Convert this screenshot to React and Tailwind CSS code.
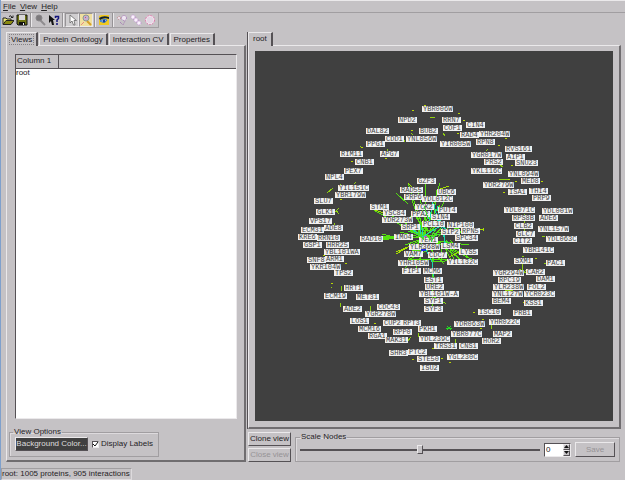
import React from "react";

const LABELS = [
  ["YBR006W", 422, 109], ["NPD2", 398, 120], ["DAL82", 366, 131], ["BUB2", 419, 131], ["CDD1", 385, 139],
  ["YNL056W", 406, 139], ["PPG1", 366, 144], ["RIM11", 340, 154], ["CNB1", 355, 162], ["APG7", 380, 154],
  ["PEX7", 344, 171], ["NPL4", 325, 177], ["YBR179W", 335, 195], ["YIL151C", 338, 188], ["SLU7", 314, 201],
  ["GZF3", 417, 181], ["PRP6", 404, 197], ["RAD55", 400, 190], ["UBC6", 437, 192], ["YDL012C", 422, 199],
  ["RRN7", 442, 120], ["COF1", 443, 128], ["CIN4", 466, 125], ["RAD4", 460, 135], ["YHR204W", 479, 134],
  ["YIR005W", 440, 144], ["RPN8", 476, 142], ["RVS161", 505, 149], ["YGR017W", 471, 155], ["AIP1", 506, 157],
  ["PRS2", 484, 162], ["SNU23", 515, 163], ["YKL116C", 471, 171], ["YNL094W", 508, 174], ["MED8", 521, 181],
  ["YDR279W", 483, 185], ["ISA1", 508, 192], ["THI4", 529, 191], ["PRP9", 532, 198],
  ["GLK1", 316, 212], ["STM1", 370, 207], ["VPS17", 309, 221], ["ADE8", 324, 228], ["ECM31", 301, 230],
  ["KRE6", 298, 237], ["RRN10", 317, 238], ["RAD10", 360, 239], ["GSP1", 303, 245], ["HRR25", 326, 245],
  ["YBL101WA", 324, 252], ["SNF8", 307, 260], ["ARM1", 325, 259], ["YKR104W", 310, 267], ["TPS2", 334, 273],
  ["HRT1", 344, 288], ["ECM19", 324, 296], ["MET31", 356, 297],
  ["YDR273W", 382, 220], ["YSC84", 383, 213], ["YCK2", 415, 207], ["PUT4", 438, 210], ["PPA2", 411, 214],
  ["SIN4", 431, 217], ["SRP1", 401, 227], ["PCL10", 422, 224], ["NIP100", 447, 225], ["SIP2", 441, 232],
  ["RPN5", 461, 231], ["IMO4", 394, 237], ["TEM1", 419, 240], ["SPC34", 455, 238], ["YLR368W", 409, 247],
  ["LSM4", 441, 246], ["LYS5", 459, 252], ["VAM7", 404, 254], ["CDC7", 428, 255], ["YHR105W", 398, 263],
  ["YIL132C", 447, 262], ["FIP1", 402, 271], ["MCM6", 423, 271], ["EST1", 424, 280], ["URE2", 425, 287],
  ["YBL101W-A", 419, 294], ["SYF1", 424, 301], ["SYF3", 424, 309],
  ["YDL071C", 504, 210], ["YDL001W", 542, 211], ["RPS8B", 512, 218], ["ADE6", 539, 218], ["CLB2", 514, 226],
  ["YNL157W", 538, 229], ["GLC7", 516, 234], ["YDL063C", 546, 239], ["CIT2", 513, 241], ["YBR141C", 523, 250],
  ["SXM1", 514, 261], ["PAC1", 546, 263], ["YGR294W", 493, 273], ["CAR2", 526, 272], ["RPC19", 498, 280],
  ["DAM1", 536, 279], ["YLR238W", 493, 287], ["FOL2", 527, 287], ["BEM4", 492, 301], ["YNL127W", 492, 294],
  ["YCR023C", 524, 294], ["KSS1", 524, 303],
  ["ADE2", 343, 309], ["CDC43", 377, 307], ["YGR278W", 365, 314], ["LOS1", 350, 321], ["MCM16", 358, 329],
  ["CUP2", 383, 323], ["RPT3", 402, 323], ["RPP0", 393, 332], ["PKH1", 418, 329], ["RGA1", 368, 336],
  ["MAK31", 385, 340], ["YDL239C", 419, 339], ["TRS31", 434, 346], ["SHR3", 389, 353], ["PTC2", 408, 352],
  ["STE50", 417, 359], ["ISU2", 420, 368], ["ISC10", 478, 312], ["PRB1", 513, 313], ["YDR063W", 454, 324],
  ["YHR022C", 489, 322], ["YBR077C", 451, 334], ["MAP2", 493, 334], ["HOR2", 482, 341], ["CNS1", 459, 346],
  ["YGL230C", 447, 357],
];

const HUB_EDGES =
  "M425 234L408 183M425 234L426 183M425 234L440 183M427 236L449 192M425 234L385 212M424 238L372 209M424 238L381 237M382 234L398 238L381 240M424 238L396 254L410 246M428 236L483 229M430 240L469 245M430 240L466 250M430 240L478 262M432 262L470 259L450 240M428 250L400 264M432 250L433 312M433 296L444 303M445 224L430 240M455 222L432 242M440 205L420 235M412 200L424 236M418 190L428 232M400 225L424 236M400 220L420 214M415 215L428 238M405 245L430 236M432 234L468 226M440 232L470 232M448 246L462 262M444 246L452 262M420 218L420 240M428 212L424 240M410 262L404 270M420 258L416 268M396 193L408 204M437 190L434 212M441 262L441 246M408 259L450 260M420 240L408 260M422 240L420 262M426 244L444 264M434 240L456 256M400 232L424 238M398 217L422 236M446 214L428 234M421 240L413 250L421 250M418 232L426 216M381 236L394 236M381 238L392 238M415 232L426 232M416 229L430 231M436 232L446 234M450 250L456 264M452 248L468 258";
const HUB_CYAN =
  "M433 200L430 218M437 206L446 246M420 225L420 238M413 230L428 240M445 230L444 246M432 262L434 280M425 210L432 226M424 236L440 226M434 214L446 230M423 244L432 262M421 228L420 238M422 228L422 238M434 204L438 222";
const HUB_FRONT =
  "M424 206L428 218M436 229L429 240M408 231L424 236M440 234L428 238M433 258v4M414 233L424 238M418 232L424 240M433 276v2M437 232L431 242M446 240L449 244";
const OUTER_EDGES =
  "M430 118l5-1M411 119l3-1M399 123l2-2M411 133l2 2M403 139l2 3M360 146l2 2M388 149l-2 4M327 193l6-5M340 184v2M354 184l2-2M339 208l-3 3l3 3M335 211h3M334 223l3 5M341 286v5M331 287h1M371 306l-1 6M340 303v4M408 341l3-4M418 333l1 4M491 325v4M507 285v9M524 234v-20M522 259v13M519 269l4 3l4-2M520 272h6M500 165l3 2M542 237l3-1M555 212l4-2M499 180l9-1M443 133l2 3M474 137l3-2M486 151l2-2M505 290l8 1M544 263l4 1M522 257l2-1M455 339v4M444 302l2 2M331 226h5";
const DOTS = [
  [412, 110], [458, 113], [463, 120], [411, 130], [457, 133], [498, 145], [361, 147], [351, 161],
  [340, 199], [511, 165], [508, 179], [515, 181], [541, 181], [503, 192], [331, 283], [345, 263],
  [473, 312], [482, 319], [374, 323], [412, 359], [441, 358], [449, 362], [498, 302], [535, 258],
  [523, 302], [323, 255], [505, 138], [480, 328], [385, 158], [424, 105], [432, 348],
];

function Network() {
  return (
    <svg role="img" aria-label="Protein network" viewBox="255 51 358 370" className="block h-full w-full">
      <g fill="none" strokeWidth="1" shapeRendering="crispEdges">
        <path d={OUTER_EDGES} stroke="#8fd012" />
        {DOTS.map(([x, y]) => (
          <rect key={x + "-" + y} x={x} y={y} width="2" height="1" fill="#b8d800" />
        ))}
        <path d="M446 328h6M447 326l4 4M447 330l4-4" stroke="#22dd22" />
        <path d={HUB_EDGES} stroke="#55e010" />
        <path
          d="M396 254l14-8M396 252l12-5M372 209l12 4M469 231l14-2M437 190l12-4M415 190l-7-7M483 228v3M449 257l10-5"
          stroke="#a8e000"
        />
        <path d={HUB_CYAN} stroke="#18d8b0" />
      </g>
      {LABELS.map(([name, x, y]) => (
        <g key={name}>
          <rect x={x} y={y - 3} width={Math.round(name.length * 4.2 + 2)} height="6" fill="#f0f0f0" />
          <text x={x + 1} y={y + 2} className="fill-[#404040] font-['Liberation_Mono',monospace] text-[7px]">
            {name}
          </text>
        </g>
      ))}
      <g fill="none" shapeRendering="crispEdges">
        <path d={HUB_FRONT} stroke="#40e030" />
        <path d="M421 250h5" stroke="#2030e0" strokeWidth="2" />
        <path d="M424 236h3" stroke="#d050c0" />
      </g>
    </svg>
  );
}

const raised = "border border-t-[#ebe9eb] border-l-[#ebe9eb] border-r-[#555155] border-b-[#555155]";
const sunken = "border border-t-[#555155] border-l-[#555155] border-r-[#ebe9eb] border-b-[#ebe9eb]";
const pressedTool = "border border-t-[#969396] border-l-[#969396] border-r-[#ebe9eb] border-b-[#ebe9eb] bg-[#d0ced0]";

function Tool({ label, pressed, children }) {
  return (
    <button
      type="button"
      aria-label={label}
      className={"flex h-[14px] w-[14px] items-center justify-center " + (pressed ? pressedTool : "")}
    >
      <svg viewBox="0 0 12 12" className="h-3 w-3 shrink-0">{children}</svg>
    </button>
  );
}

function Separator() {
  return <span className="mx-[1px] h-[14px] w-[2px] border-l border-r border-l-[#969396] border-r-[#ebe9eb]" />;
}

function Toolbar() {
  return (
    <div role="toolbar" className="flex h-[15px] w-fit items-center border-r border-b border-[#a19ea1]">
      <Tool label="Open">
        <path d="M1 10V4h3l1 1h4v2" fill="#eeea78" stroke="#222" />
        <path d="M1 10.500l3-4h8l-3 4z" fill="#8a8a10" stroke="#222" />
        <path d="M7 2.500q2-2 3 1m-1 0h2v-2" fill="none" stroke="#222" />
      </Tool>
      <Tool label="Save file">
        <path d="M1 1h10v10H2l-1-1z" fill="#6f7410" stroke="#111" />
        <path d="M3 1h6v5H3z" fill="#d8d6d8" />
        <path d="M3 8h6v3H3z" fill="#111" />
        <path d="M7 9h1v2H7z" fill="#eee" />
      </Tool>
      <Separator />
      <Tool label="Find">
        <path d="M6 6l5 5" stroke="#8f8c8f" strokeWidth="2" />
        <circle cx="5" cy="4" r="3" fill="#7c797c" stroke="#8a878a" />
      </Tool>
      <Tool label="What's this?">
        <path d="M1 1v8l2-2 1 4h2L5 6h2z" fill="#111" />
        <path d="M7.500 4V2.500h3v2l-1.500 1.500V8M9 9v2" fill="none" stroke="#14147c" strokeWidth="1.500" />
      </Tool>
      <Separator />
      <Tool label="Select" pressed>
        <path d="M4 1v8l2-2 1.500 4h1.500L8 6.500h2.500z" fill="#fff" stroke="#666" strokeWidth="0.800" />
      </Tool>
      <Tool label="Zoom" pressed>
        <path d="M0 0h12v12H0z" fill="#f0e0a0" />
        <path d="M7 7l4 4" stroke="#d5a028" strokeWidth="2" />
        <circle cx="6" cy="4" r="3" fill="#c5b0d0" stroke="#8d9a8e" />
        <path d="M1 11l3-3" stroke="#e88a80" />
        <path d="M5 3h1v1H5z" fill="#d05070" />
      </Tool>
      <Separator />
      <Tool label="Overview">
        <path d="M1 2l2-1h8v10H1z" fill="#f0c820" />
        <path d="M1 4q4-3 10-1v2Q6 3 2 6z" fill="#123" />
        <path d="M2 7q4-3 7-1-2 4-7 1z" fill="#fff" stroke="#2878d8" />
        <circle cx="6" cy="7" r="1.500" fill="#1640a0" />
      </Tool>
      <Separator />
      <Tool label="Random layout">
        <g fill="#efe6f2" stroke="#a070b0" strokeDasharray="1 1">
          <circle cx="3" cy="4" r="1.500" stroke="#c08080" />
          <circle cx="8" cy="4" r="2.500" />
          <path d="M4 8l3 3 2-4" fill="none" />
        </g>
      </Tool>
      <Tool label="Cluster layout">
        <g fill="#fbf2fd" stroke="#b978d0" strokeWidth="0.700" strokeDasharray="1 1">
          <circle cx="3" cy="3" r="2" /><circle cx="6" cy="6" r="2" /><circle cx="9" cy="9" r="2" />
        </g>
      </Tool>
      <Tool label="Circle layout">
        <circle cx="6" cy="6" r="4" fill="#e2d8e4" stroke="#f4e8f2" strokeWidth="1.500" />
        <circle cx="6" cy="6" r="4.500" fill="none" stroke="#d878a8" strokeWidth="1" strokeDasharray="2 1" />
      </Tool>
      <span className="w-[1px]" />
    </div>
  );
}

function Tab({ active, children }) {
  return (
    <button
      type="button"
      role="tab"
      aria-selected={!!active}
      className={
        "relative whitespace-nowrap border-t border-l border-r-2 border-t-[#ebe9eb] border-l-[#ebe9eb] border-r-[#555155] " +
        (active ? "-mb-[1px] h-[14px] bg-[#c5c2c5] px-[2px] pb-[1px]" : "h-3 px-[3px]")
      }
    >
      {children}
    </button>
  );
}

const group = "min-w-0 border border-[#a19ea1] shadow-[inset_1px_1px_0_#dddadd]";

export default function App() {
  return (
    <div className="flex h-screen min-h-[400px] flex-col border-l border-[#7fa0cc] bg-[#c5c2c5] font-['Liberation_Sans',Arial,sans-serif] text-[8px] leading-[10px] text-[#252325]">
      <nav className="flex h-[13px] shrink-0 items-center gap-1 border-t border-b border-t-[#ebe9eb] border-b-[#a19ea1] pl-[2px]">
        <button type="button"><u>F</u>ile</button>
        <button type="button"><u>V</u>iew</button>
        <button type="button"><u>H</u>elp</button>
      </nav>
      <Toolbar />

      <main className="flex min-h-0 flex-1 pt-1 pr-1">
        <section className="flex w-[245px] shrink-0 flex-col pl-[5px]">
          <div role="tablist" className="flex h-[13px] shrink-0 items-end gap-[1px]">
            <Tab active><span className="block border border-dotted border-[#858285] px-px leading-[9px]">Views</span></Tab>
            <Tab>Protein Ontology</Tab>
            <Tab>Interaction CV</Tab>
            <Tab>Properties</Tab>
          </div>
          <div className="flex min-h-0 flex-1 flex-col border-t border-r-2 border-b-2 border-l border-t-[#ebe9eb] border-r-[#706d70] border-b-[#706d70] border-l-[#ebe9eb] pt-2 pr-[7px] pl-2">
            <div className={"min-h-0 flex-1 overflow-hidden bg-white " + sunken}>
              <table className="w-full border-collapse text-left">
                <thead>
                  <tr className="h-[13px] border-b border-[#555155] bg-[#c5c2c5]">
                    <th scope="col" className="w-[42px] whitespace-nowrap border-r border-[#555155] pl-[1px] font-normal">Column 1</th>
                    <th aria-hidden="true" />
                  </tr>
                </thead>
                <tbody>
                  <tr className="leading-[8px]"><td colSpan="2">root</td></tr>
                </tbody>
              </table>
            </div>
            <fieldset className={"mt-2 mb-[3px] -ml-[6px] h-[30px] w-[150px] shrink-0 px-[5px] " + group}>
              <legend className="-ml-[2px] px-[1px]">View Options</legend>
              <div className="flex items-center gap-1">
                <button type="button" className={"h-[14px] w-[74px] whitespace-nowrap bg-[#404040] text-[#dedede] " + raised}>Background Color...</button>
                <label className="flex items-center gap-[2px] whitespace-nowrap">
                  <span className="relative flex h-[7px] w-[7px]">
                    <input type="checkbox" defaultChecked className="peer h-[7px] w-[7px] appearance-none border border-t-[#555155] border-r-[#ebe9eb] border-b-[#ebe9eb] border-l-[#555155] bg-white" />
                    <svg viewBox="0 0 7 7" className="pointer-events-none absolute inset-0 hidden peer-checked:block"><path d="M1 3l2 2 3-4" fill="none" stroke="#111" strokeWidth="1" /></svg>
                  </span>
                  Display Labels
                </label>
              </div>
            </fieldset>
          </div>
        </section>

        <section className="flex min-w-0 flex-1 flex-col pl-[1px]">
          <div className="flex min-h-0 flex-1 flex-col border-l border-[#555155]">
            <div role="tablist" className="flex h-[13px] shrink-0 items-end">
              <Tab active><span className="px-[2px]">root</span></Tab>
            </div>
            <div className="min-h-0 flex-1 border-t border-r-2 border-b-2 border-l border-t-[#ebe9eb] border-r-[#706d70] border-b-[#706d70] border-l-[#ebe9eb] px-[6px] pt-[5px] pb-[6px]">
              <div className="h-full bg-[#404040]"><Network /></div>
            </div>
          </div>
          <div className="flex shrink-0 items-start gap-[4px] pt-[3px] pr-[1px] pl-[1px]">
            <div className="flex w-[43px] shrink-0 flex-col gap-[2px]">
              <button type="button" className={"h-[14px] whitespace-nowrap text-center " + raised}>Clone view</button>
              <button type="button" disabled className={"h-[14px] whitespace-nowrap text-center text-[#969396] " + raised}>Close view</button>
            </div>
            <fieldset className={"h-[30px] flex-1 px-1 " + group}>
              <legend className="px-[1px] whitespace-nowrap">Scale Nodes</legend>
              <div className="flex items-center gap-1">
                <input
                  type="range"
                  aria-label="Scale Nodes"
                  className="h-[9px] min-w-0 flex-1 appearance-none bg-[linear-gradient(#555155,#555155)] bg-[length:100%_2px] bg-center bg-no-repeat [&::-webkit-slider-thumb]:h-[9px] [&::-webkit-slider-thumb]:w-[6px] [&::-webkit-slider-thumb]:appearance-none [&::-webkit-slider-thumb]:border [&::-webkit-slider-thumb]:border-t-[#ebe9eb] [&::-webkit-slider-thumb]:border-r-[#555155] [&::-webkit-slider-thumb]:border-b-[#555155] [&::-webkit-slider-thumb]:border-l-[#ebe9eb] [&::-webkit-slider-thumb]:bg-[#c5c2c5]"
                />
                <div className={"flex h-[14px] w-[27px] bg-white " + sunken}>
                  <input type="text" aria-label="Scale value" defaultValue="0" className="min-w-0 flex-1 pl-[1px]" />
                  <span className="flex w-[7px] flex-col">
                    <button type="button" aria-label="Increase" className={"flex flex-1 items-center justify-center bg-[#c5c2c5] " + raised}>
                      <svg viewBox="0 0 5 3" className="h-[3px] w-[5px]"><path d="M0 3l2.500-3L5 3z" fill="#111" /></svg>
                    </button>
                    <button type="button" aria-label="Decrease" className={"flex flex-1 items-center justify-center bg-[#c5c2c5] " + raised}>
                      <svg viewBox="0 0 5 3" className="h-[3px] w-[5px]"><path d="M0 0l2.500 3L5 0z" fill="#111" /></svg>
                    </button>
                  </span>
                </div>
                <button type="button" disabled className={"h-[15px] w-10 text-[#969396] " + raised}>Save</button>
              </div>
            </fieldset>
          </div>
        </section>
      </main>

      <footer className="mt-[6px] flex h-3 shrink-0">
        <span className="border border-t-[#a19ea1] border-r-[#dddadd] border-b-[#dddadd] border-l-[#a19ea1] pr-[1px]">root: 1005 proteins, 905 interactions</span>
      </footer>
    </div>
  );
}
